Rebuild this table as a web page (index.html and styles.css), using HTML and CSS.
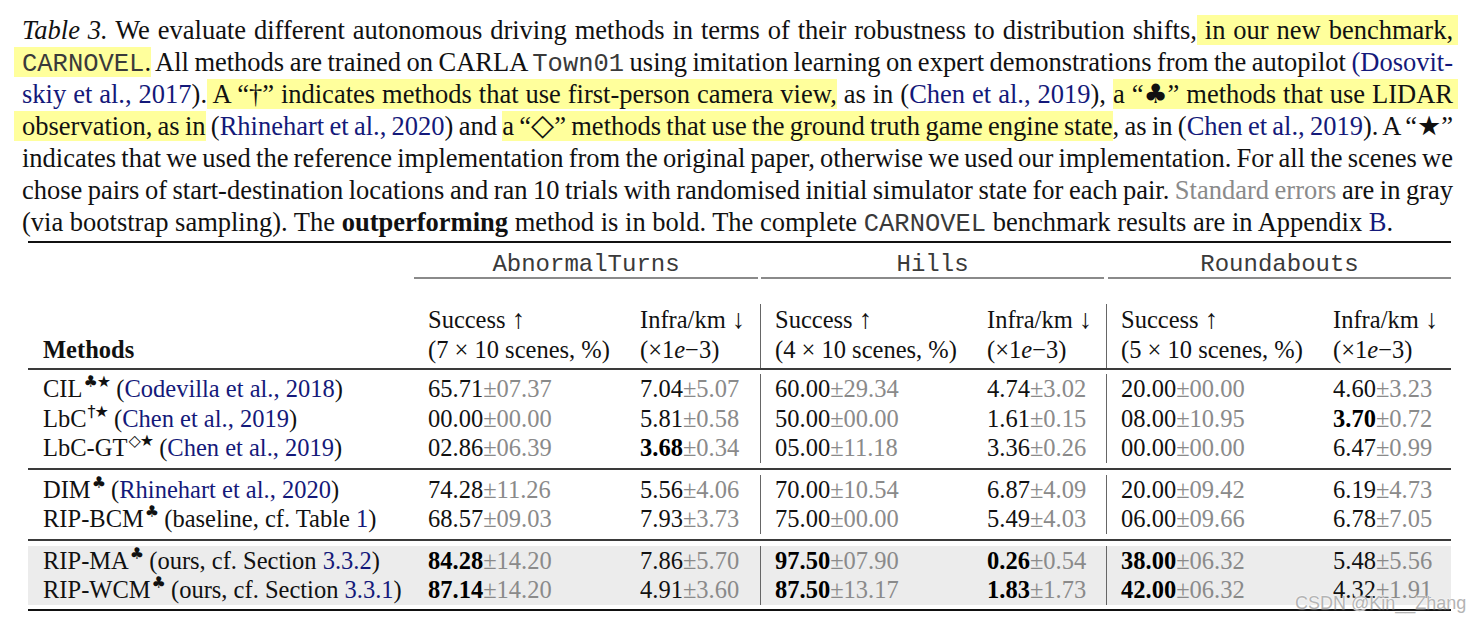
FILE: index.html
```html
<!DOCTYPE html>
<html>
<head>
<meta charset="utf-8">
<link rel="stylesheet" href="styles.css">
</head>
<body>
<div class="page">
  <p class="caption">
    <span class="ln"><i>Table 3.</i> We evaluate different autonomous driving methods in terms of their robustness to distribution shifts,<span class="hl hl-r"> in our new benchmark,</span></span>
    <span class="ln"><span class="hl hl-l"><span class="mono">CARNOVEL</span>.</span> All methods are trained on CARLA <span class="mono">Town01</span> using imitation learning on expert demonstrations from the autopilot <span class="cite">(Dosovit-</span></span>
    <span class="ln"><span class="cite">skiy et al., 2017</span>).<span class="hl"> A <span class="q">“†”</span> indicates methods that use first-person camera view,</span> as in (<span class="cite">Chen et al., 2019</span>), <span class="hl hl-r">a <span class="q">“<span class="sym">♣</span>”</span> methods that use LIDAR</span></span>
    <span class="ln"><span class="hl hl-l">observation, as in</span> (<span class="cite">Rhinehart et al., 2020</span>) and <span class="hl">a <span class="q">“<span class="sym dia">◇</span>”</span> methods that use the ground truth game engine state</span>, as in (<span class="cite">Chen et al., 2019</span>). A <span class="q">“<span class="sym">★</span>”</span></span>
    <span class="ln">indicates that we used the reference implementation from the original paper, otherwise we used our implementation. For all the scenes we</span>
    <span class="ln">chose pairs of start-destination locations and ran 10 trials with randomised initial simulator state for each pair. <span class="gray">Standard errors</span> are in gray</span>
    <span class="ln last">(via bootstrap sampling). The <b>outperforming</b> method is in bold. The complete <span class="mono">CARNOVEL</span> benchmark results are in Appendix <span class="cite">B</span>.</span>
  </p>

  <table class="res">
    <colgroup>
      <col class="w-m"><col class="w-s"><col class="w-i"><col class="w-s2"><col class="w-i2"><col class="w-s2"><col class="w-i3">
    </colgroup>
    <thead>
      <tr class="grp">
        <th></th>
        <th colspan="2"><div class="gl gl-a">AbnormalTurns</div></th>
        <th colspan="2"><div class="gl gl-b">Hills</div></th>
        <th colspan="2"><div class="gl gl-c">Roundabouts</div></th>
      </tr>
      <tr class="sp25"><td colspan="7"></td></tr>
      <tr class="sub">
        <th class="meth">Methods</th>
        <th>Success <span class="arr">↑</span><br>(7 × 10 scenes, %)</th>
        <th>Infra/km <span class="arr">↓</span><br>(×1<i>e</i>−3)</th>
        <th class="vl">Success <span class="arr">↑</span><br>(4 × 10 scenes, %)</th>
        <th>Infra/km <span class="arr">↓</span><br>(×1<i>e</i>−3)</th>
        <th class="vl">Success <span class="arr">↑</span><br>(5 × 10 scenes, %)</th>
        <th>Infra/km <span class="arr">↓</span><br>(×1<i>e</i>−3)</th>
      </tr>
      <tr class="rule"><td colspan="7"></td></tr>
    </thead>
    <tbody>
      <tr class="sp4"><td colspan="7"></td></tr>
      <tr class="row">
        <td class="m">CIL<sup class="sx">♣★</sup> (<span class="cite">Codevilla et al., 2018</span>)</td>
        <td>65.71<span class="e">±07.37</span></td>
        <td>7.04<span class="e">±5.07</span></td>
        <td class="vl">60.00<span class="e">±29.34</span></td>
        <td>4.74<span class="e">±3.02</span></td>
        <td class="vl">20.00<span class="e">±00.00</span></td>
        <td>4.60<span class="e">±3.23</span></td>
      </tr>
      <tr class="row">
        <td class="m">LbC<sup class="sx">†★</sup> (<span class="cite">Chen et al., 2019</span>)</td>
        <td>00.00<span class="e">±00.00</span></td>
        <td>5.81<span class="e">±0.58</span></td>
        <td class="vl">50.00<span class="e">±00.00</span></td>
        <td>1.61<span class="e">±0.15</span></td>
        <td class="vl">08.00<span class="e">±10.95</span></td>
        <td><b>3.70</b><span class="e">±0.72</span></td>
      </tr>
      <tr class="row">
        <td class="m">LbC-GT<sup class="sx">◇★</sup> (<span class="cite">Chen et al., 2019</span>)</td>
        <td>02.86<span class="e">±06.39</span></td>
        <td><b>3.68</b><span class="e">±0.34</span></td>
        <td class="vl">05.00<span class="e">±11.18</span></td>
        <td>3.36<span class="e">±0.26</span></td>
        <td class="vl">00.00<span class="e">±00.00</span></td>
        <td>6.47<span class="e">±0.99</span></td>
      </tr>
      <tr class="sp5"><td colspan="7"></td></tr>
      <tr class="rule"><td colspan="7"></td></tr>
      <tr class="sp5"><td colspan="7"></td></tr>
      <tr class="row">
        <td class="m">DIM<sup class="sx">♣</sup> (<span class="cite">Rhinehart et al., 2020</span>)</td>
        <td>74.28<span class="e">±11.26</span></td>
        <td>5.56<span class="e">±4.06</span></td>
        <td class="vl">70.00<span class="e">±10.54</span></td>
        <td>6.87<span class="e">±4.09</span></td>
        <td class="vl">20.00<span class="e">±09.42</span></td>
        <td>6.19<span class="e">±4.73</span></td>
      </tr>
      <tr class="row">
        <td class="m">RIP-BCM<sup class="sx">♣</sup> (baseline, cf. Table <span class="cite">1</span>)</td>
        <td>68.57<span class="e">±09.03</span></td>
        <td>7.93<span class="e">±3.73</span></td>
        <td class="vl">75.00<span class="e">±00.00</span></td>
        <td>5.49<span class="e">±4.03</span></td>
        <td class="vl">06.00<span class="e">±09.66</span></td>
        <td>6.78<span class="e">±7.05</span></td>
      </tr>
      <tr class="sp5"><td colspan="7"></td></tr>
      <tr class="rule"><td colspan="7"></td></tr>
      <tr class="sp5"><td colspan="7"></td></tr>
      <tr class="row hi">
        <td class="m">RIP-MA<sup class="sx">♣</sup> (ours, cf. Section <span class="cite">3.3.2</span>)</td>
        <td><b>84.28</b><span class="e">±14.20</span></td>
        <td>7.86<span class="e">±5.70</span></td>
        <td class="vl"><b>97.50</b><span class="e">±07.90</span></td>
        <td><b>0.26</b><span class="e">±0.54</span></td>
        <td class="vl"><b>38.00</b><span class="e">±06.32</span></td>
        <td>5.48<span class="e">±5.56</span></td>
      </tr>
      <tr class="row hi">
        <td class="m">RIP-WCM<sup class="sx">♣</sup> (ours, cf. Section <span class="cite">3.3.1</span>)</td>
        <td><b>87.14</b><span class="e">±14.20</span></td>
        <td>4.91<span class="e">±3.60</span></td>
        <td class="vl"><b>87.50</b><span class="e">±13.17</span></td>
        <td><b>1.83</b><span class="e">±1.73</span></td>
        <td class="vl"><b>42.00</b><span class="e">±06.32</span></td>
        <td>4.32<span class="e">±1.91</span></td>
      </tr>
      <tr class="sp4"><td colspan="7"></td></tr>
      <tr class="rule bottom"><td colspan="7"></td></tr>
    </tbody>
  </table>

  <div class="watermark">CSDN @Kin__Zhang</div>
</div>
</body>
</html>
```

FILE: styles.css
```css
* { box-sizing: border-box; }
html, body { margin: 0; padding: 0; background: #fff; }
body {
  font-family: "Liberation Serif", "Times New Roman", serif;
  color: #111;
}
.page {
  position: relative;
  width: 1484px;
  height: 624px;
  overflow: hidden;
}

/* ---------- caption ---------- */
.caption {
  margin: 14px 0 0 22px;
  width: 1431px;
  font-size: 26.5px;
  line-height: 32px;
}
.ln {
  display: block;
  height: 32px;
  text-align: justify;
  text-align-last: justify;
  word-spacing: -3px;
}
.ln.last { text-align-last: left; word-spacing: 0; }
.mono {
  font-family: "Liberation Mono", "Courier New", monospace;
  font-size: 25.5px;
  color: #3a3a3a;
}
.cite { color: #14197a; }
.gray { color: #8a8a8a; }
.hl { background: #ffff9c; }
.hl-l { box-shadow: -8px 0 0 #ffff9c; }
.hl-r { box-shadow: 5px 0 0 #ffff9c; }
.q { display: inline-block; }
.sym {
  font-family: "DejaVu Sans", sans-serif;
  font-size: 27px;
  line-height: 0;
}
.sym.dia { font-size: 30px; }

/* ---------- table ---------- */
.res {
  margin: 3px 0 0 28px;
  width: 1423px;
  table-layout: fixed;
  border-collapse: separate;
  border-spacing: 0;
  border-top: 2px solid #111;
  font-size: 24.5px;
}
.w-m { width: 386px; }
.w-s { width: 212px; }
.w-i { width: 134px; }
.w-s2 { width: 213px; }
.w-i2 { width: 133px; }
.w-i3 { width: 132px; }

.res th, .res td {
  padding: 0 0 0 14px;
  text-align: left;
  white-space: nowrap;
  font-weight: normal;
}
.res td[colspan="7"] { padding: 0; font-size: 0; line-height: 0; }

.grp th { padding: 0; vertical-align: top; }
.gl {
  font-family: "Liberation Mono", "Courier New", monospace;
  font-size: 24px;
  line-height: 25px;
  padding-top: 9px;
  text-align: center;
  color: #3a3a3a;
  border-bottom: 2px solid #8a8a8a;
}
.gl-a { margin-right: 2px; }
.gl-b { margin: 0 2px 0 1px; }
.gl-c { margin-left: 2px; }

.sp25 td { height: 25px; }
.sp4 td { height: 4px; }
.sp5 td { height: 5px; }

.sub th {
  height: 64px;
  vertical-align: bottom;
  line-height: 29.5px;
  padding-bottom: 4px;
}
.sub .meth { padding-left: 15px; font-weight: bold; }
.arr { font-size: 27px; line-height: 0; }

.rule td { height: 2px; background: #3a3a3a; }
.rule.bottom td { background: #111; }

.row td { height: 29.5px; line-height: 29.5px; vertical-align: middle; }
.row td.m { padding-left: 15px; }
.row b { font-weight: bold; color: #000; }
.e { color: #8a8a8a; }
.hi td { background: #ececec; }

.vl { border-left: 1px solid #666; }

.sx {
  font-family: "DejaVu Sans", sans-serif;
  font-size: 16px;
  line-height: 0;
  vertical-align: 10px;
  margin-left: 1px;
  letter-spacing: -1px;
}

/* ---------- watermark ---------- */
.watermark {
  position: absolute;
  left: 1295px;
  top: 594px;
  font-family: "Liberation Sans", Arial, sans-serif;
  font-size: 18px;
  line-height: 18px;
  color: #b4b4b4;
  text-shadow: 0 0 2px #fff, 0 0 1px #fff;
  white-space: nowrap;
}
```
